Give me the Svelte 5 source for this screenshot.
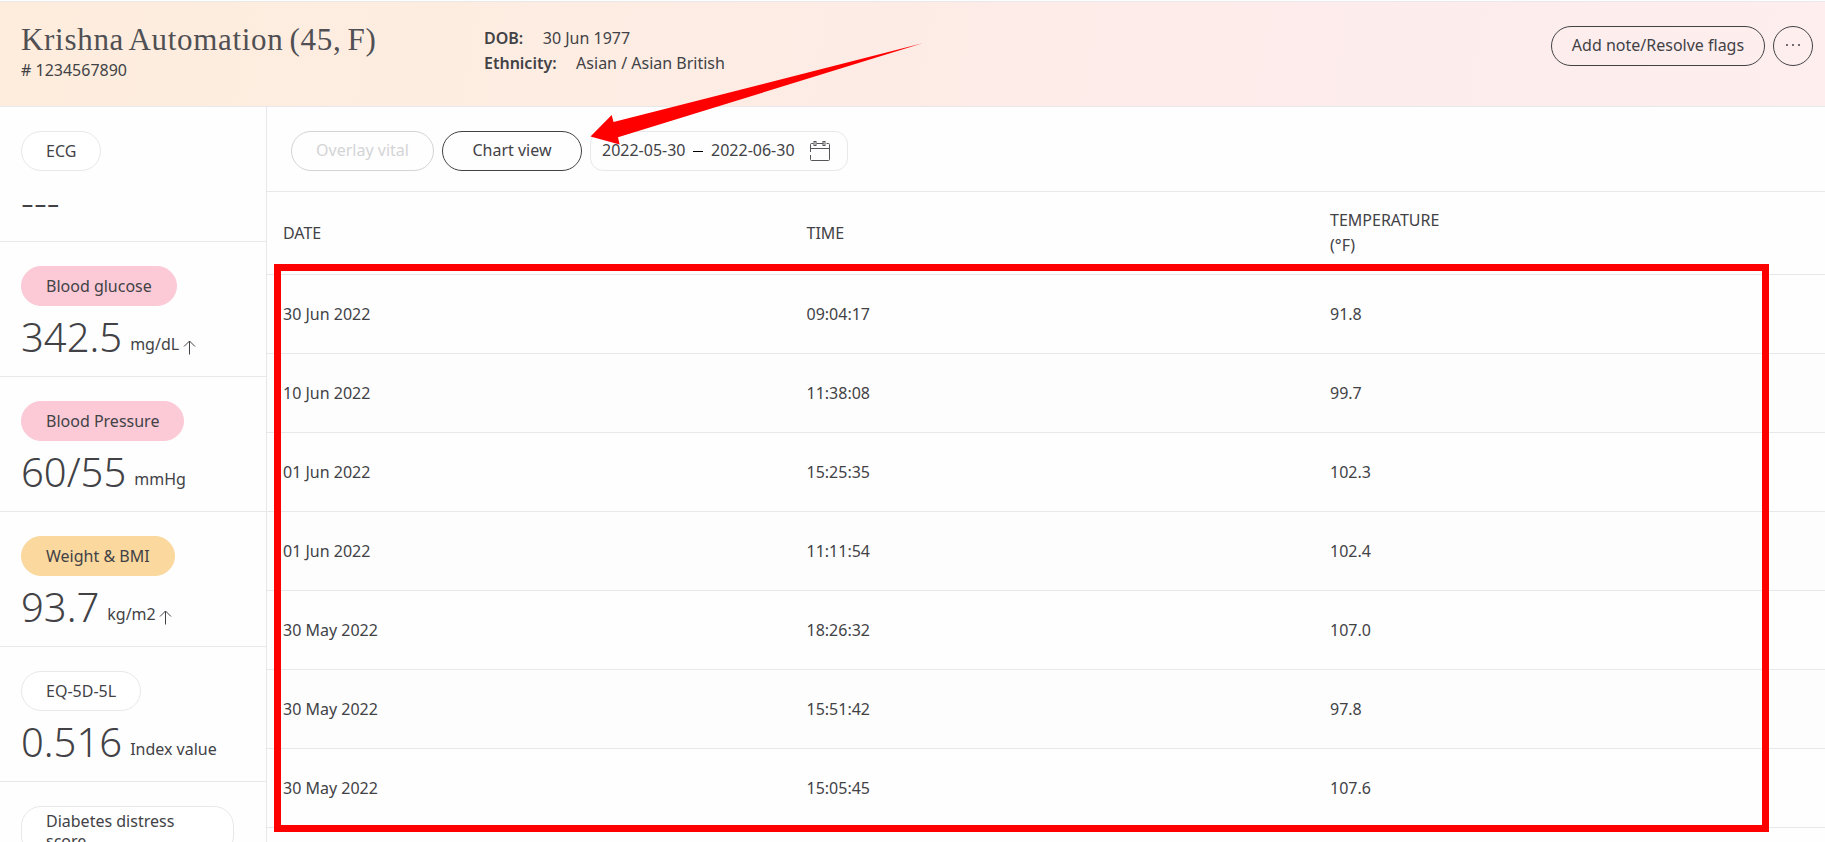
<script>
  const vitals = [
    { name: 'ECG', value: '---', unit: '', tone: 'plain' },
    { name: 'Blood glucose', value: '342.5', unit: 'mg/dL', tone: 'pink', up: true },
    { name: 'Blood Pressure', value: '60/55', unit: 'mmHg', tone: 'pink' },
    { name: 'Weight & BMI', value: '93.7', unit: 'kg/m2', tone: 'amber', up: true },
    { name: 'EQ-5D-5L', value: '0.516', unit: 'Index value', tone: 'plain' },
    { name: 'Diabetes distress score', value: '', unit: '', tone: 'plain' }
  ];
  const readings = [
    ['30 Jun 2022', '09:04:17', '91.8'],
    ['10 Jun 2022', '11:38:08', '99.7'],
    ['01 Jun 2022', '15:25:35', '102.3'],
    ['01 Jun 2022', '11:11:54', '102.4'],
    ['30 May 2022', '18:26:32', '107.0'],
    ['30 May 2022', '15:51:42', '97.8'],
    ['30 May 2022', '15:05:45', '107.6']
  ];
</script>

<div class="page">
  <header>
    <div class="patient">
      <h1>Krishna Automation (45, F)</h1>
      <div class="number"># 1234567890</div>
    </div>
    <div class="details">
      <div><b>DOB:</b><span>30 Jun 1977</span></div>
      <div><b>Ethnicity:</b><span>Asian / Asian British</span></div>
    </div>
    <div class="actions">
      <button class="note">Add note/Resolve flags</button>
      <button class="more" aria-label="More">
        <svg width="16" height="4" viewBox="0 0 16 4"><circle cx="2" cy="2" r="1" /><circle cx="8" cy="2" r="1" /><circle cx="14" cy="2" r="1" /></svg>
      </button>
    </div>
  </header>

  <div class="body">
    <aside>
      {#each vitals as v}
        <section>
          <div class="pill {v.tone}">{v.name}</div>
          <div class="reading">
            <span class="value">{v.value}</span>
            <span class="unit">{v.unit}</span>
            {#if v.up}
              <svg class="up" width="13" height="15" viewBox="0 0 13 15"><path d="M6.5 14.5V1M1 6.5L6.5 1L12 6.5" /></svg>
            {/if}
          </div>
        </section>
      {/each}
    </aside>

    <main>
      <div class="toolbar">
        <button class="overlay" disabled>Overlay vital</button>
        <button class="chart">Chart view</button>
        <div class="range">
          <span>2022-05-30</span><i></i><span>2022-06-30</span>
          <svg width="20" height="21" viewBox="0 0 20 21">
            <path d="M.5 11V3.5Q.5 2.5 1.5 2.5H3.5M6.5 2.5H13.5M16.5 2.5H18.5Q19.5 2.5 19.5 3.5V18.5Q19.5 19.5 18.5 19.5H1.5Q.5 19.5 .5 18.5V14M.5 7.5H19.5" />
            <rect x="4" y=".5" width="2" height="4" /><rect x="13" y=".5" width="2" height="4" />
          </svg>
        </div>
      </div>
      <div class="row head"><span>DATE</span><span>TIME</span><span>TEMPERATURE<br />(°F)</span></div>
      {#each readings as r}
        <div class="row">{#each r as cell}<span>{cell}</span>{/each}</div>
      {/each}
    </main>
  </div>

  <div class="frame"></div>
  <svg class="arrow" width="333" height="102" viewBox="590 43 333 102">
    <path d="M590.5 136.5L611.7 115L613.5 122L922.5 43.3L618 137.3L619.6 144.5Z" />
  </svg>
</div>

<style>
  :global(body) { background: #fff; overflow: hidden; }
  .page {
    position: relative;
    box-sizing: border-box;
    width: 100%;
    height: 842px;
    padding-top: 1px;
    overflow: hidden;
    background: #fefefe;
    color: #424246;
    font: 16px/25px 'Noto Sans', sans-serif;
  }
  button { box-sizing: border-box; height: 40px; margin: 0; padding: 0 0 2px; border: 1px solid #424246; border-radius: 20px; background: none; color: inherit; font: inherit; line-height: 36px; }
  header {
    display: flex;
    box-sizing: border-box;
    height: 106px;
    padding: 0 12px 0 21px;
    border-top: 1px solid #e8e8ea;
    border-bottom: 1px solid #e8e8ea;
    background: linear-gradient(100deg, #feeddd 0%, #fdede1 25%, #fdece6 50%, #fdecec 75%, #feeeee 100%);
  }
  .patient { width: 463px; padding-top: 20px; }
  h1 { margin: 0; color: #505054; font: 400 31px/36px 'Liberation Serif', serif; white-space: nowrap; letter-spacing: 0.7px; word-spacing: -2.4px; }
  .number { line-height: 24px; }
  .details { padding-top: 24px; }
  .details b { margin-right: 19.5px; font-weight: 600; }
  .actions { display: flex; gap: 8px; margin-left: auto; padding-top: 24px; }
  .note { width: 214px; }
  .more { display: flex; align-items: center; justify-content: center; width: 40px; }
  .more svg { fill: #424246; }
  .body { display: flex; height: 735px; }
  aside { flex: none; box-sizing: border-box; width: 267px; border-right: 1px solid #e8e8ea; }
  section { box-sizing: border-box; height: 135px; padding: 24px 0 0 21px; border-bottom: 1px solid #e8e8ea; }
  .pill { display: flex; align-items: center; box-sizing: border-box; width: fit-content; max-width: 213px; min-height: 40px; padding: 4px 24px; border: 1px solid #e8e8ea; border-radius: 20px; line-height: 20px; }
  .pink { border-color: #fbcad6; background: #fbcad6; }
  .amber { border-color: #fad89e; background: #fad89e; }
  .plain { background: #fff; }
  .reading { display: flex; height: 60px; }
  .value { font-size: 40px; font-weight: 300; line-height: 61px; }
  .unit { margin-left: 8px; line-height: 77px; }
  .up { margin: 33.5px 0 0 3.5px; fill: none; stroke: #424246; }
  main { flex: 1; min-width: 0; }
  .toolbar { display: flex; gap: 8px; box-sizing: border-box; height: 85px; padding: 24px; border-bottom: 1px solid #e8e8ea; }
  .overlay { width: 143px; border-color: #d4d4d6; color: #d4d4d6; }
  .chart { width: 140px; }
  .range { display: flex; align-items: center; box-sizing: border-box; width: 258px; height: 40px; padding: 0 17px 2px 11px; border: 1px solid #e8e8ea; border-radius: 13px; }
  .range i { width: 10px; height: 1px; margin: 3px 8px 0 7.5px; background: #000; }
  .range svg { margin: 3px 0 0 auto; fill: none; stroke: #55555a; }
  .row { display: grid; grid-template-columns: 523.5px 523.5px 1fr; align-items: center; box-sizing: border-box; height: 79px; padding-left: 16px; border-bottom: 1px solid #e8e8ea; }
  .row:nth-child(even) { background: #fdfdfd; }
  .row.head { height: 83px; background: none; }
  .frame { position: absolute; left: 274px; top: 264px; box-sizing: border-box; width: 1495px; height: 568px; border: 7px solid #f00; }
  .arrow { position: absolute; left: 590px; top: 43px; fill: #f00; }
</style>
